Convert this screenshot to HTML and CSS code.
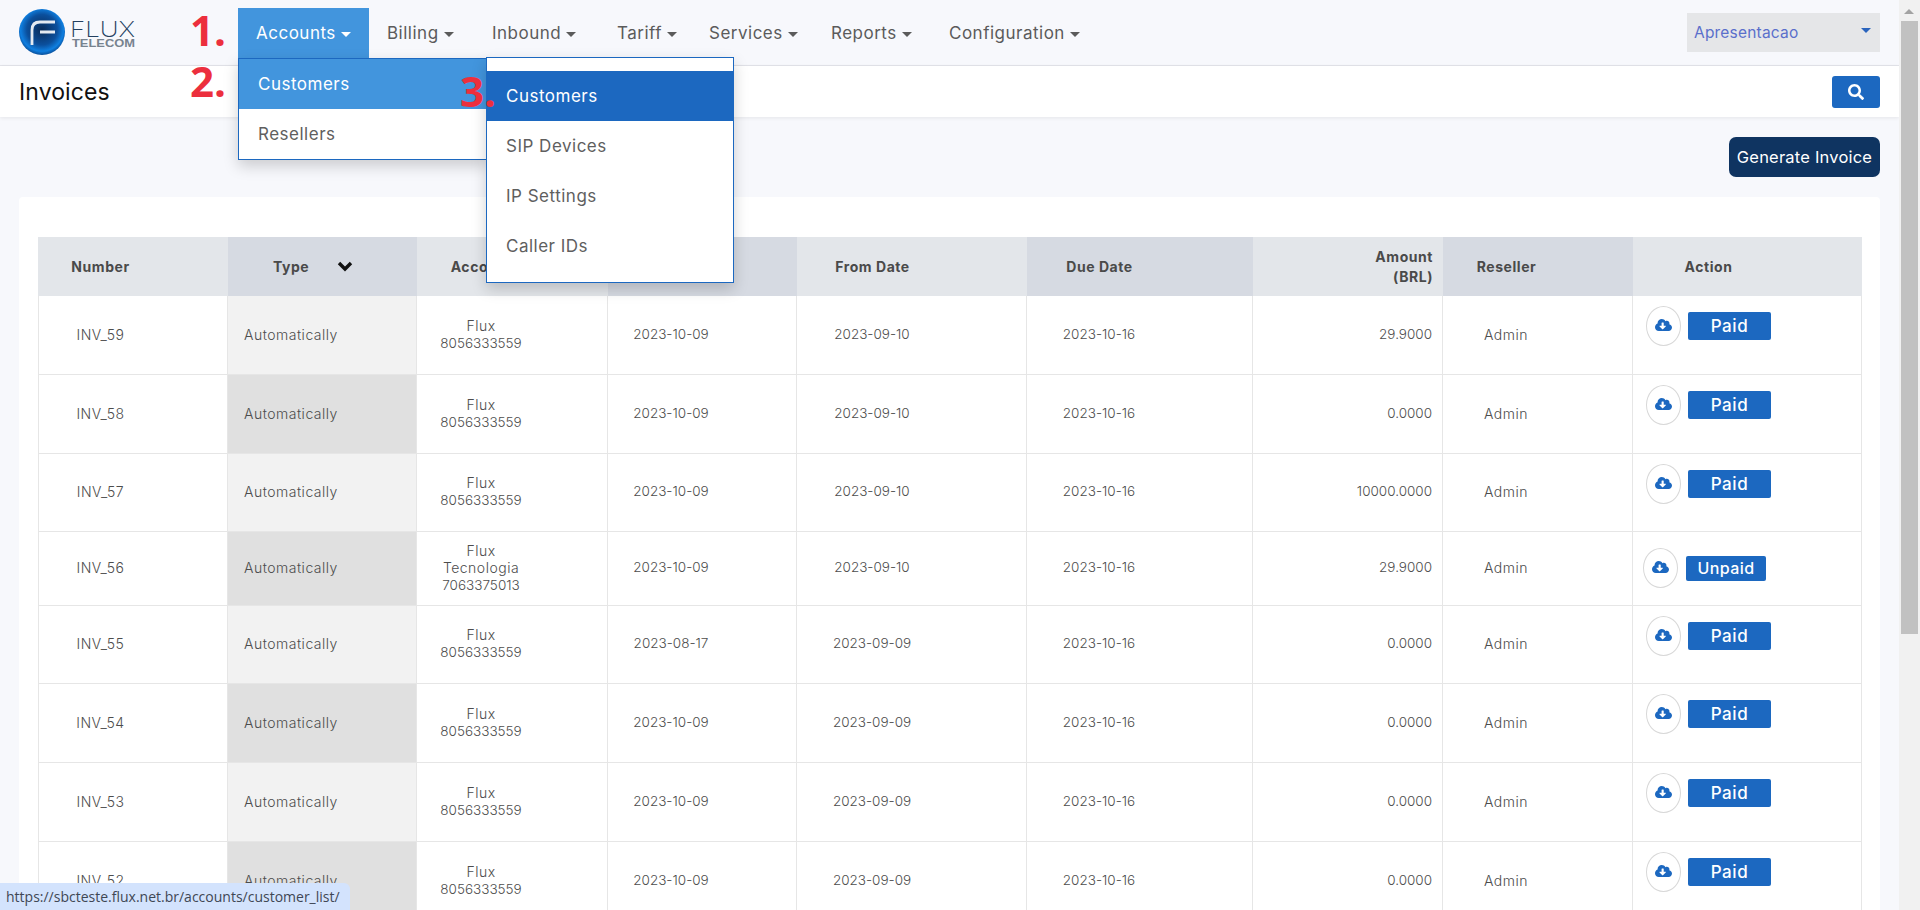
FILE: index.html
```html
<!DOCTYPE html>
<html lang="en">
<head>
<meta charset="utf-8">
<title>Invoices</title>
<link rel="stylesheet" href="styles.css">
</head>
<body>
<svg class="sprite" width="0" height="0" aria-hidden="true">
  <symbol id="cloud" viewBox="0 0 640 512"><path d="M537.6 226.6c4.1-10.7 6.4-22.4 6.4-34.6 0-53-43-96-96-96-19.7 0-38.1 6-53.3 16.2C367 64.2 315.3 32 256 32c-88.4 0-160 71.6-160 160 0 2.7.1 5.4.2 8.1C40.2 219.8 0 273.2 0 336c0 79.5 64.5 144 144 144h368c70.7 0 128-57.3 128-128 0-61.9-44-113.6-102.4-125.4zm-132.9 88.7L299.3 420.7c-6.2 6.2-16.4 6.2-22.6 0L171.3 315.3c-10.1-10.1-2.9-27.3 11.3-27.3H248V176c0-8.8 7.2-16 16-16h48c8.8 0 16 7.2 16 16v112h65.4c14.2 0 21.4 17.2 11.3 27.3z"/></symbol>
</svg>
<div class="app">
  <div class="page">
    <header class="topbar">
      <a class="logo">
        <svg width="130" height="50" viewBox="0 0 130 50">
          <defs>
            <radialGradient id="orb" cx="50%" cy="45%" r="55%">
              <stop offset="0" stop-color="#0a2c58"/>
              <stop offset=".6" stop-color="#0b4f9c"/>
              <stop offset=".85" stop-color="#0f7fe0"/>
              <stop offset="1" stop-color="#0a4f9a"/>
            </radialGradient>
          </defs>
          <circle cx="23" cy="24" r="23" fill="url(#orb)"/>
          <path d="M13 37V22q0-8 8-8h15M21 24h15" fill="none" stroke="#e4eaf1" stroke-width="2.8"/>
          <text x="51" y="29" class="logo-flux" textLength="65" lengthAdjust="spacingAndGlyphs">FLUX</text>
          <text x="53" y="39" class="logo-telecom" textLength="63" lengthAdjust="spacingAndGlyphs">TELECOM</text>
        </svg>
      </a>
      <nav class="menu">
        <div class="menu-item active w-accounts">Accounts<i class="caret"></i>
          <div class="drop drop-main">
            <div class="drop-row selected">Customers</div>
            <div class="drop-row">Resellers</div>
          </div>
          <div class="drop drop-sub">
            <div class="drop-row current">Customers</div>
            <div class="drop-row">SIP Devices</div>
            <div class="drop-row">IP Settings</div>
            <div class="drop-row">Caller IDs</div>
          </div>
        </div>
        <div class="menu-item w-billing">Billing<i class="caret"></i></div>
        <div class="menu-item w-inbound">Inbound<i class="caret"></i></div>
        <div class="menu-item w-tariff">Tariff<i class="caret"></i></div>
        <div class="menu-item w-services">Services<i class="caret"></i></div>
        <div class="menu-item w-reports">Reports<i class="caret"></i></div>
        <div class="menu-item w-config">Configuration<i class="caret"></i></div>
      </nav>
      <div class="account-select"><span>Apresentacao</span><i class="caret caret-blue"></i></div>
    </header>

    <section class="titlebar">
      <h1>Invoices</h1>
      <button class="search-btn" aria-label="Search">
        <svg width="16" height="16" viewBox="0 0 512 512"><path fill="#fff" d="M505 442.7L405.3 343c-4.5-4.5-10.6-7-17-7H372c27.6-35.3 44-79.7 44-128C416 93.1 322.9 0 208 0S0 93.1 0 208s93.1 208 208 208c48.3 0 92.7-16.4 128-44v16.3c0 6.4 2.5 12.5 7 17l99.7 99.7c9.4 9.4 24.6 9.4 33.9 0l28.3-28.3c9.4-9.4 9.4-24.6.1-34zM208 336c-70.7 0-128-57.2-128-128 0-70.7 57.2-128 128-128 70.7 0 128 57.2 128 128 0 70.7-57.2 128-128 128z"/></svg>
      </button>
    </section>

    <main class="content">
      <div class="toolbar"><button class="generate-btn">Generate Invoice</button></div>
      <div class="card">
        <table class="grid">
          <colgroup>
            <col class="c1"><col class="c2"><col class="c3"><col class="c4"><col class="c5"><col class="c6"><col class="c7"><col class="c8"><col class="c9">
          </colgroup>
          <thead>
            <tr>
              <th class="col-number">Number</th>
              <th class="col-type dark"><span class="type-head">Type<svg class="chev" width="16" height="11" viewBox="0 0 16 11"><path d="M2 2l6 6 6-6" fill="none" stroke="#111" stroke-width="3.4"/></svg></span></th>
              <th class="col-account">Account</th>
              <th class="col-invoice dark">Invoice Date</th>
              <th class="col-from">From Date</th>
              <th class="col-due dark">Due Date</th>
              <th class="col-amount">Amount<br>(BRL)</th>
              <th class="col-reseller dark">Reseller</th>
              <th class="col-action">Action</th>
            </tr>
          </thead>
          <tbody>
            <tr>
              <td class="col-number">INV_59</td><td class="col-type">Automatically</td><td class="col-account">Flux<br><span class="num">8056333559</span></td><td class="col-invoice num">2023-10-09</td><td class="col-from num">2023-09-10</td><td class="col-due num">2023-10-16</td><td class="col-amount num">29.9000</td><td class="col-reseller">Admin</td>
              <td class="col-action"><div class="actions"><span class="circle"><svg width="17" height="14"><use href="#cloud"/></svg></span><span class="badge">Paid</span></div></td>
            </tr>
            <tr>
              <td class="col-number">INV_58</td><td class="col-type">Automatically</td><td class="col-account">Flux<br><span class="num">8056333559</span></td><td class="col-invoice num">2023-10-09</td><td class="col-from num">2023-09-10</td><td class="col-due num">2023-10-16</td><td class="col-amount num">0.0000</td><td class="col-reseller">Admin</td>
              <td class="col-action"><div class="actions"><span class="circle"><svg width="17" height="14"><use href="#cloud"/></svg></span><span class="badge">Paid</span></div></td>
            </tr>
            <tr class="tight">
              <td class="col-number">INV_57</td><td class="col-type">Automatically</td><td class="col-account">Flux<br><span class="num">8056333559</span></td><td class="col-invoice num">2023-10-09</td><td class="col-from num">2023-09-10</td><td class="col-due num">2023-10-16</td><td class="col-amount num">10000.0000</td><td class="col-reseller">Admin</td>
              <td class="col-action"><div class="actions"><span class="circle"><svg width="17" height="14"><use href="#cloud"/></svg></span><span class="badge">Paid</span></div></td>
            </tr>
            <tr class="short">
              <td class="col-number">INV_56</td><td class="col-type">Automatically</td><td class="col-account">Flux<br>Tecnologia<br><span class="num">7063375013</span></td><td class="col-invoice num">2023-10-09</td><td class="col-from num">2023-09-10</td><td class="col-due num">2023-10-16</td><td class="col-amount num">29.9000</td><td class="col-reseller">Admin</td>
              <td class="col-action"><div class="actions unpaid"><span class="circle"><svg width="17" height="14"><use href="#cloud"/></svg></span><span class="badge">Unpaid</span></div></td>
            </tr>
            <tr class="tight">
              <td class="col-number">INV_55</td><td class="col-type">Automatically</td><td class="col-account">Flux<br><span class="num">8056333559</span></td><td class="col-invoice num">2023-08-17</td><td class="col-from num">2023-09-09</td><td class="col-due num">2023-10-16</td><td class="col-amount num">0.0000</td><td class="col-reseller">Admin</td>
              <td class="col-action"><div class="actions"><span class="circle"><svg width="17" height="14"><use href="#cloud"/></svg></span><span class="badge">Paid</span></div></td>
            </tr>
            <tr>
              <td class="col-number">INV_54</td><td class="col-type">Automatically</td><td class="col-account">Flux<br><span class="num">8056333559</span></td><td class="col-invoice num">2023-10-09</td><td class="col-from num">2023-09-09</td><td class="col-due num">2023-10-16</td><td class="col-amount num">0.0000</td><td class="col-reseller">Admin</td>
              <td class="col-action"><div class="actions"><span class="circle"><svg width="17" height="14"><use href="#cloud"/></svg></span><span class="badge">Paid</span></div></td>
            </tr>
            <tr>
              <td class="col-number">INV_53</td><td class="col-type">Automatically</td><td class="col-account">Flux<br><span class="num">8056333559</span></td><td class="col-invoice num">2023-10-09</td><td class="col-from num">2023-09-09</td><td class="col-due num">2023-10-16</td><td class="col-amount num">0.0000</td><td class="col-reseller">Admin</td>
              <td class="col-action"><div class="actions"><span class="circle"><svg width="17" height="14"><use href="#cloud"/></svg></span><span class="badge">Paid</span></div></td>
            </tr>
            <tr>
              <td class="col-number">INV_52</td><td class="col-type">Automatically</td><td class="col-account">Flux<br><span class="num">8056333559</span></td><td class="col-invoice num">2023-10-09</td><td class="col-from num">2023-09-09</td><td class="col-due num">2023-10-16</td><td class="col-amount num">0.0000</td><td class="col-reseller">Admin</td>
              <td class="col-action"><div class="actions"><span class="circle"><svg width="17" height="14"><use href="#cloud"/></svg></span><span class="badge">Paid</span></div></td>
            </tr>
          </tbody>
        </table>
      </div>
    </main>

    <span class="note note-1">1.</span>
    <span class="note note-2">2.</span>
    <span class="note note-3">3.</span>
  </div>

  <aside class="scrollbar">
    <i class="scroll-up"></i>
    <div class="scroll-thumb"></div>
  </aside>
</div>
<div class="status-link">https://sbcteste.flux.net.br/accounts/customer_list/</div>
</body>
</html>
```

FILE: styles.css
```css
* { box-sizing: border-box; }
html, body { margin: 0; height: 100%; overflow: hidden; }
body { font-family: Inter, "Open Sans", sans-serif; color: #555; background: #f7f8fc; }
.sprite { position: absolute; }
.app { display: flex; height: 910px; }
.page { position: relative; width: 1899px; height: 910px; overflow: hidden; background: #f7f8fc; }

/* top bar */
.topbar { display: flex; align-items: flex-start; height: 66px; padding-top: 8px; border-bottom: 1px solid #e3e4ea; background: #f7f8fc; }
.logo { display: block; flex: 0 0 238px; padding-left: 19px; height: 50px; }
.logo svg { display: block; }
.logo-flux { font: 200 22px Inter, sans-serif; fill: #23405f; }
.logo-telecom { font: 700 10px "Liberation Sans", sans-serif; fill: #77838f; }
.menu { display: flex; }
.menu-item { position: relative; height: 50px; padding-left: 18px; line-height: 50px; font-size: 17px; letter-spacing: .5px; color: #5b5b5b; white-space: nowrap; }
.menu-item.active { background: #4295dd; color: #fff; }
.w-accounts { width: 131px; }
.w-billing { width: 105px; }
.w-inbound { width: 125px; }
.w-tariff { width: 92px; }
.w-services { width: 122px; }
.w-reports { width: 118px; }
.w-config { width: 170px; }
.caret { display: inline-block; margin-left: 5px; vertical-align: 2px; border: 5px solid transparent; border-top-color: currentColor; border-bottom: 0; }

.drop { position: absolute; background: #fff; border: 1px solid #1c68c0; box-shadow: 0 6px 14px rgba(0, 0, 0, .18); letter-spacing: .5px; color: #5f5f5f; font-size: 17px; z-index: 3; }
.drop-main { left: 0; top: 50px; width: 250px; height: 102px; }
.drop-sub { left: 248px; top: 49px; width: 248px; height: 226px; padding-top: 13px; }
.drop-row { height: 50px; padding-left: 19px; line-height: 50px; }
.drop-row.selected { background: #4295dd; color: #fff; }
.drop-row.current { background: #1c68c0; color: #fff; margin: 0; }

.account-select { position: relative; display: flex; margin: 5px 19px 0 auto; width: 193px; height: 39px; padding-left: 7px; background: #e5e6e8; color: #5a6fcb; font-size: 15.5px; letter-spacing: .2px; line-height: 39px; }
.caret-blue { position: absolute; right: 9px; top: 15px; margin: 0; color: #2a64bd; }

/* title bar */
.titlebar { display: flex; justify-content: space-between; align-items: center; height: 51px; padding: 0 19px; background: #fff; box-shadow: 0 1px 4px rgba(0, 0, 0, .08); position: relative; }
.titlebar h1 { margin: 0; font-size: 23px; font-weight: 400; color: #111; letter-spacing: .1px; }
.search-btn { display: flex; align-items: center; justify-content: center; width: 48px; height: 32px; border: 0; border-radius: 3px; background: #1c68c0; }

/* content */
.content { padding: 0 19px; }
.toolbar { display: flex; justify-content: flex-end; height: 80px; padding-top: 20px; }
.generate-btn { width: 151px; height: 40px; padding: 0; border: 0; border-radius: 7px; background: #0f3461; color: #fff; font: 400 16.5px Inter, sans-serif; letter-spacing: .2px; }
.card { background: #fff; border-radius: 4px; padding: 40px 0 0 19px; height: 800px; }

/* table */
.grid { table-layout: fixed; width: 1824px; border-collapse: separate; border-spacing: 0; font-size: 14px; letter-spacing: .5px; }
.c1 { width: 190px; }
.c2 { width: 189px; }
.c3 { width: 191px; }
.c4 { width: 189px; }
.c5 { width: 230px; }
.c6 { width: 226px; }
.c7, .c8 { width: 190px; }
.c9 { width: 229px; }
.grid th { height: 59px; background: #e3e6ea; color: #4a4a4a; font-size: 14px; font-weight: 700; letter-spacing: .55px; line-height: 20px; padding-top: 0; padding-bottom: 0; }
.grid th.dark { background: #d6dae2; }
.grid td { height: 79px; padding-top: 0; padding-bottom: 2px; border-right: 1px solid #e6e6e6; border-bottom: 1px solid #e6e6e6; font-weight: 300; color: #4d4d4d; line-height: 17px; }
.grid tr.tight td { height: 78px; }
.grid tr.short td { height: 74px; }
.grid td:first-child { border-left: 1px solid #e6e6e6; }
.grid .num { font-size: 13.5px; letter-spacing: 0; }
.col-number { text-align: center; padding-right: 66px; }
.col-type { text-align: left; padding-left: 16px; }
th.col-type { padding-left: 45px; }
.type-head { display: flex; align-items: center; }
.chev { margin: 0 0 0 28px; }
.grid tbody tr:nth-child(odd) .col-type { background: #f2f2f2; }
.grid tbody tr:nth-child(even) .col-type { background: #e0e0e0; }
.col-account { text-align: center; padding-right: 63px; }
.col-invoice { text-align: center; padding-right: 63px; }
.col-from { text-align: center; padding-right: 80px; }
.col-due { text-align: center; padding-right: 82px; }
.col-amount { text-align: right; padding-right: 10px; }
.col-reseller { text-align: center; padding-right: 64px; }
th.col-action { text-align: center; padding-right: 79px; }
.grid td.col-action { vertical-align: top; padding: 0 0 0 13px; }
.actions { display: flex; align-items: flex-start; gap: 7px; padding-top: 10px; }
.actions.unpaid { gap: 8px; padding-top: 16px; margin-left: -3px; }
.circle { display: flex; align-items: center; justify-content: center; width: 35px; height: 40px; padding-bottom: 2px; border: 1px solid #d8d8d8; border-radius: 50%; background: #fff; }
.circle svg { fill: #1c68c0; }
.badge { display: block; width: 83px; height: 28px; margin-top: 6px; border-radius: 2px; background: #1c68c0; color: #fff; font-size: 17px; font-weight: 500; letter-spacing: .6px; line-height: 28px; text-align: center; }
.unpaid .badge { width: 80px; height: 25px; margin-top: 8px; line-height: 25px; font-size: 16px; letter-spacing: .4px; }

/* annotations */
.note { position: absolute; font: 700 42px/1 "Open Sans", sans-serif; color: #ec2f3d; z-index: 5; }
.note-1 { left: 190px; top: 9px; }
.note-2 { left: 190px; top: 60px; }
.note-3 { left: 460px; top: 70px; }

/* scrollbar */
.scrollbar { position: relative; width: 21px; height: 910px; padding: 21px 2px 0; background: #f1f1f1; }
.scroll-up { position: absolute; left: 5px; top: 9px; border: 5px solid transparent; border-top: 0; border-bottom-color: #a3a3a3; }
.scroll-thumb { width: 17px; height: 613px; background: #c1c1c1; }

/* link preview */
.status-link { position: fixed; left: 0; bottom: 0; width: 350px; height: 27px; padding-left: 6px; border-top-right-radius: 6px; background: #d3e3fd; color: #3f4754; font: 400 14px/27px "Open Sans", sans-serif; white-space: nowrap; z-index: 9; }
```
